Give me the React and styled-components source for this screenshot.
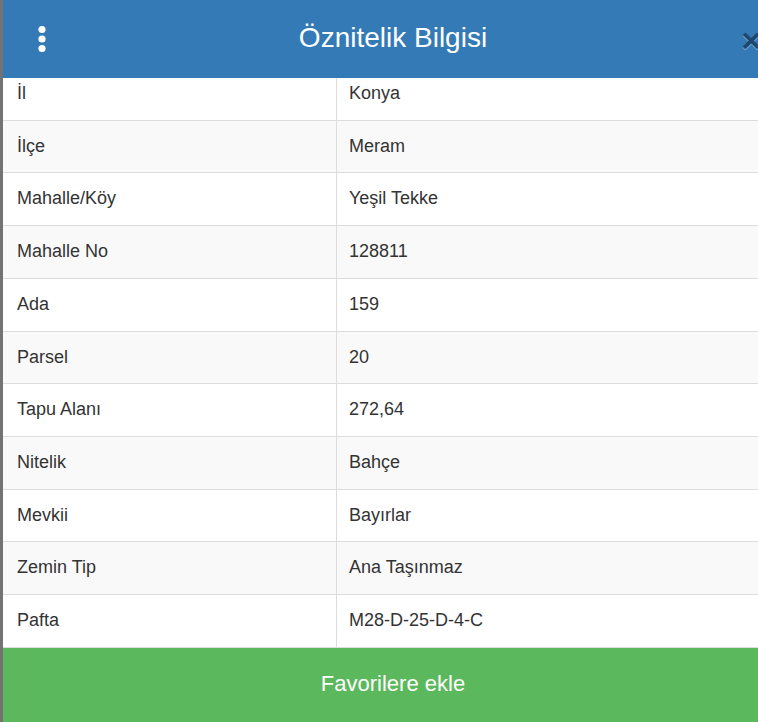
import React, { useEffect, useRef } from 'react'
import styled, { createGlobalStyle } from 'styled-components'

const rows = [
  { label: 'İl', value: 'Konya' },
  { label: 'İlçe', value: 'Meram' },
  { label: 'Mahalle/Köy', value: 'Yeşil Tekke' },
  { label: 'Mahalle No', value: '128811' },
  { label: 'Ada', value: '159' },
  { label: 'Parsel', value: '20' },
  { label: 'Tapu Alanı', value: '272,64' },
  { label: 'Nitelik', value: 'Bahçe' },
  { label: 'Mevkii', value: 'Bayırlar' },
  { label: 'Zemin Tip', value: 'Ana Taşınmaz' },
  { label: 'Pafta', value: 'M28-D-25-D-4-C' }
]

const GlobalStyle = createGlobalStyle`
  html, body {
    margin: 0;
    padding: 0;
    height: 100%;
    overflow: hidden;
  }
  body {
    font-family: "Liberation Sans", Arial, sans-serif;
    color: #333;
  }
`

const Screen = styled.div`
  display: flex;
  width: 758px;
  height: 722px;
  overflow: hidden;
  background: #737373;
`

const Gutter = styled.div`
  flex: 0 0 3px;
  background: #737373;
`

const Panel = styled.div`
  flex: 0 0 780px;
  display: flex;
  flex-direction: column;
  background: #fff;
`

const Header = styled.header`
  flex: 0 0 78px;
  display: grid;
  grid-template-columns: 1fr auto 1fr;
  align-items: center;
  background: #337ab7;
  color: #fff;
`

const Title = styled.h4`
  margin: 0;
  font-size: 28px;
  font-weight: normal;
  line-height: 1;
  padding-bottom: 2px;
`

const MenuButton = styled.button`
  justify-self: start;
  display: flex;
  margin-left: 29px;
  padding: 0;
  border: 0;
  background: none;
  cursor: pointer;
`

const CloseButton = styled.button`
  justify-self: end;
  margin-right: 22px;
  margin-top: 2px;
  padding: 0;
  border: 0;
  background: none;
  font-family: "Liberation Sans", Arial, sans-serif;
  font-size: 34px;
  font-weight: bold;
  line-height: 1;
  color: #000;
  opacity: 0.4;
  text-shadow: 0 1px 0 #fff;
  cursor: pointer;
`

const Body = styled.div`
  flex: 1;
  overflow: hidden;
`

const Table = styled.table`
  width: 100%;
  border-collapse: collapse;
  font-size: 18px;
  line-height: 25.7px;
  border-bottom: 1px solid #ddd;
`

const Row = styled.tr`
  background: ${p => (p.$striped ? '#f9f9f9' : '#fff')};
`

const Cell = styled.td`
  padding: 13px 12px;
  border-top: 1px solid #ddd;
  vertical-align: middle;
  white-space: nowrap;
  & + & {
    border-left: 1px solid #ddd;
  }
`

const LabelCell = styled(Cell)`
  width: 305px;
  padding-left: 14px;
  padding-right: 14px;
`

const Footer = styled.button`
  flex: 0 0 74px;
  border: 0;
  background: #5cb85c;
  color: #fff;
  font-family: "Liberation Sans", Arial, sans-serif;
  font-size: 22px;
  padding: 0 0 2px;
  cursor: pointer;
`

function DotsIcon() {
  return (
    <svg width="20" height="30" viewBox="0 0 20 30">
      <circle cx="10" cy="5.5" r="3.6" fill="#fff" />
      <circle cx="10" cy="15" r="3.6" fill="#fff" />
      <circle cx="10" cy="24.5" r="3.6" fill="#fff" />
    </svg>
  )
}

export default function App() {
  const bodyRef = useRef(null)

  useEffect(() => {
    // the list is shown scrolled a little past its first row
    if (bodyRef.current) bodyRef.current.scrollTop = 11
  }, [])

  return (
    <Screen>
      <GlobalStyle />
      <Gutter />
      <Panel>
        <Header>
          <MenuButton aria-label="Menü">
            <DotsIcon />
          </MenuButton>
          <Title>Öznitelik Bilgisi</Title>
          <CloseButton aria-label="Kapat">×</CloseButton>
        </Header>
        <Body ref={bodyRef}>
          <Table>
            <tbody>
              {rows.map((row, i) => (
                <Row key={row.label} $striped={i % 2 === 1}>
                  <LabelCell>{row.label}</LabelCell>
                  <Cell>{row.value}</Cell>
                </Row>
              ))}
            </tbody>
          </Table>
        </Body>
        <Footer>Favorilere ekle</Footer>
      </Panel>
    </Screen>
  )
}
